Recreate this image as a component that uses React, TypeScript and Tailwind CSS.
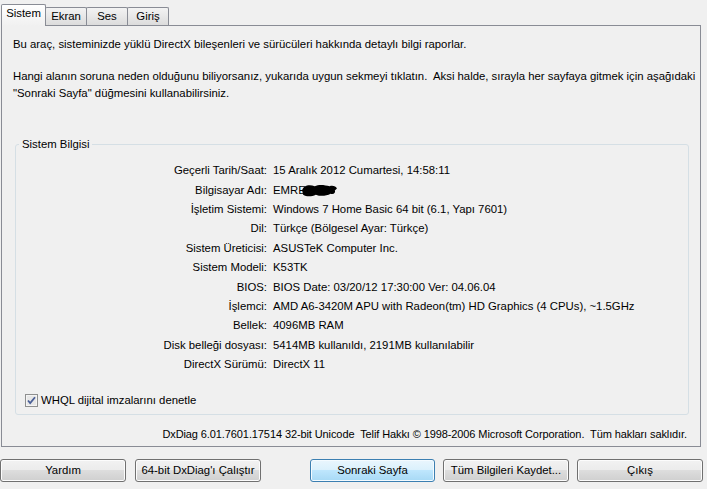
import React from 'react';

const rows: [string, React.ReactNode][] = [
  ['Geçerli Tarih/Saat:', '15 Aralık 2012 Cumartesi, 14:58:11'],
  ['Bilgisayar Adı:', 'EMRE'],
  ['İşletim Sistemi:', 'Windows 7 Home Basic 64 bit (6.1, Yapı 7601)'],
  ['Dil:', 'Türkçe (Bölgesel Ayar: Türkçe)'],
  ['Sistem Üreticisi:', 'ASUSTeK Computer Inc.'],
  ['Sistem Modeli:', 'K53TK'],
  ['BIOS:', 'BIOS Date: 03/20/12 17:30:00 Ver: 04.06.04'],
  ['İşlemci:', 'AMD A6-3420M APU with Radeon(tm) HD Graphics (4 CPUs), ~1.5GHz'],
  ['Bellek:', '4096MB RAM'],
  ['Disk belleği dosyası:', '5414MB kullanıldı, 2191MB kullanılabilir'],
  ['DirectX Sürümü:', 'DirectX 11'],
];

function Tab({ label, active, w }: { label: string; active?: boolean; w: string }) {
  if (active) {
    return (
      <div
        className={`relative z-10 -mb-px flex h-[22px] ${w} items-start justify-center rounded-t-[2px] border border-b-0 border-[#898c95] bg-linear-to-b from-white to-[#f0f0f0] pt-[2px]`}
      >
        {label}
      </div>
    );
  }
  return (
    <div
      className={`-ml-px flex h-[18px] ${w} items-start justify-center rounded-t-[2px] border border-b-0 border-[#898c95] bg-linear-to-b from-[#f3f3f3] to-[#dcdcdc] pt-[2px]`}
    >
      {label}
    </div>
  );
}

function Btn({ label, w, primary }: { label: string; w: string; primary?: boolean }) {
  return (
    <div
      className={
        primary
          ? `flex h-[23px] ${w} items-center justify-center rounded-[3px] border border-[#3c7fb1] bg-[linear-gradient(#eaf6fd_0%,#d9f0fc_50%,#bee6fd_50%,#a7d9f5_100%)] shadow-[inset_0_0_0_1px_#f4fbff]`
          : `flex h-[23px] ${w} items-center justify-center rounded-[3px] border border-[#707070] bg-[linear-gradient(#f2f2f2_0%,#ebebeb_50%,#dddddd_50%,#cfcfcf_100%)] shadow-[inset_0_0_0_1px_#fcfcfc]`
      }
    >
      {label}
    </div>
  );
}

export default function App() {
  return (
    <div className="h-[489px] w-[707px] overflow-hidden bg-[#f0f0f0] font-['Liberation_Sans',Arial,sans-serif] text-[11.35px] leading-[13px] text-black">
      {/* tabs */}
      <div className="flex h-[25px] items-end pl-px">
        <Tab label="Sistem" active w="w-[45px]" />
        <Tab label="Ekran" w="w-[42px]" />
        <Tab label="Ses" w="w-[42px]" />
        <Tab label="Giriş" w="w-[42px]" />
      </div>

      {/* tab page */}
      <div className="ml-px h-[422px] w-[700px] border border-[#898c95] bg-[#f0f0f0]">
        <p className="mt-[12px] ml-[11px]">
          Bu araç, sisteminizde yüklü DirectX bileşenleri ve sürücüleri hakkında detaylı bilgi raporlar.
        </p>
        <p className="mt-[17px] ml-[11px] leading-[17px]">
          Hangi alanın soruna neden olduğunu biliyorsanız, yukarıda uygun sekmeyi tıklatın.&nbsp; Aksi halde, sırayla her sayfaya gitmek için aşağıdaki
          <br />
          "Sonraki Sayfa" düğmesini kullanabilirsiniz.
        </p>

        <fieldset className="mt-[36px] ml-[13px] h-[277px] w-[674px] rounded-[3px] border border-[#d5dfe5] px-0 pt-0 pb-0">
          <legend className="ml-[3px] px-[3px]">Sistem Bilgisi</legend>
          <div className="mt-[10px] flex flex-col">
            {rows.map(([k, v]) => (
              <div key={k} className="flex h-[19.4px] items-center">
                <div className="w-[251px] text-right">{k}</div>
                <div className="ml-[6px] flex items-center whitespace-nowrap">
                  {v}
                  {k === 'Bilgisayar Adı:' && (
                    <svg width="38" height="13" viewBox="0 0 36 12" className="-ml-[6px]">
                      <path
                        d="M2 6 C3 1 9 0 14 2 C18 0 24 1 28 2 C31 1 34 2 35 4 L33 6 C34 8 32 10 29 9 C25 11 20 12 15 10 C11 12 6 12 3 10 Z"
                        fill="#000"
                      />
                    </svg>
                  )}
                </div>
              </div>
            ))}
          </div>
          <label className="mt-[20px] ml-[9px] flex items-center gap-[3px]">
            <svg width="13" height="13" viewBox="0 0 13 13">
              <rect x="0.5" y="0.5" width="12" height="12" fill="#f4f4f4" stroke="#8e8f8f" />
              <rect x="2" y="2" width="9" height="9" fill="#e7e7e7" />
              <path d="M3 6.5 L5.2 9 L10 3.2" stroke="#4a5f97" strokeWidth="1.8" fill="none" />
            </svg>
            <span>WHQL dijital imzalarını denetle</span>
          </label>
        </fieldset>

        <div className="mt-[13px] mr-[13px] text-right text-[11px] tracking-[-0.1px] whitespace-pre">
          {'DxDiag 6.01.7601.17514 32-bit Unicode  Telif Hakkı © 1998-2006 Microsoft Corporation.  Tüm hakları saklıdır.'}
        </div>
      </div>

      {/* buttons */}
      <div className="mt-[12px] flex">
        <Btn label="Yardım" w="w-[126px]" />
        <div className="ml-[9px]">
          <Btn label="64-bit DxDiag'ı Çalıştır" w="w-[126px]" />
        </div>
        <div className="ml-[49px]">
          <Btn label="Sonraki Sayfa" w="w-[125px]" primary />
        </div>
        <div className="ml-[8px]">
          <Btn label="Tüm Bilgileri Kaydet..." w="w-[126px]" />
        </div>
        <div className="ml-[8px]">
          <Btn label="Çıkış" w="w-[126px]" />
        </div>
      </div>
    </div>
  );
}
